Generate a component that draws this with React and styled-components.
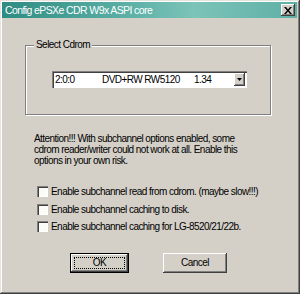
import React from 'react'
import styled, { createGlobalStyle } from 'styled-components'

const Global = createGlobalStyle`
  html, body { margin: 0; padding: 0; background: #d4d0c8; }
  body { font-family: "Liberation Sans", Arial, sans-serif; }
`

const Window = styled.div`
  box-sizing: border-box;
  width: 300px;
  height: 294px;
  padding: 2px 3px 2px 2px;
  background: #d4d0c8;
  box-shadow: inset -1px -1px 0 #404040, inset 1px 1px 0 #e6e3dc,
    inset -2px -2px 0 #808080, inset 2px 2px 0 #ffffff;
  display: flex;
  flex-direction: column;
  font-size: 10px;
  letter-spacing: -0.55px;
  white-space: nowrap;
  color: #000;
`

const TitleBar = styled.div`
  height: 16px;
  display: flex;
  align-items: center;
  justify-content: space-between;
  padding: 0 2px 0 3px;
  background: linear-gradient(to right, #2e8c82 0%, #5fb2a8 45%, #7cc3b9 65%, #5eb0a5 100%);
  color: #fff;
  font-size: 10.5px;
  letter-spacing: -0.6px;
`

const CloseBox = styled.div`
  box-sizing: border-box;
  width: 14px;
  height: 12px;
  background: #d4d0c8;
  box-shadow: inset -1px -1px 0 #404040, inset 1px 1px 0 #fff, inset -2px -2px 0 #808080;
  display: flex;
  align-items: center;
  justify-content: center;
`

const Body = styled.div`
  display: flex;
  flex-direction: column;
  padding-left: 23px;
`

const GroupBox = styled.div`
  position: relative;
  box-sizing: border-box;
  margin-top: 27px;
  width: 246px;
  height: 70px;
  border: 1px solid #808080;
  box-shadow: 1px 1px 0 #fff, inset 1px 1px 0 #fff;
  padding: 25px 0 0 26px;
`

const GroupLabel = styled.span`
  position: absolute;
  top: -7px;
  left: 8px;
  padding: 0 2px;
  background: #d4d0c8;
  line-height: 12px;
`

const Combo = styled.div`
  box-sizing: border-box;
  width: 195px;
  height: 17px;
  background: #fff;
  box-shadow: inset 1px 1px 0 #808080, inset 2px 2px 0 #404040, inset -1px -1px 0 #fff;
  display: flex;
  align-items: center;
  padding: 0 2px 0 3px;
`

const Cell = styled.span`
  width: ${p => p.$w}px;
  flex: none;
`

const DropButton = styled.div`
  margin-left: auto;
  box-sizing: border-box;
  width: 11px;
  height: 13px;
  background: #d4d0c8;
  box-shadow: inset -1px -1px 0 #404040, inset 1px 1px 0 #fff, inset -2px -2px 0 #808080;
  display: flex;
  align-items: center;
  justify-content: center;
`

const Note = styled.p`
  margin: 18px 0 0 9px;
  line-height: 11px;
`

const Options = styled.div`
  margin: 17px 0 0 12px;
  display: flex;
  flex-direction: column;
`

const Row = styled.label`
  height: 17.5px;
  display: flex;
  align-items: center;
  gap: 3px;
`

const Box = styled.span`
  box-sizing: border-box;
  width: 11px;
  height: 11px;
  background: #fbfbf8;
  box-shadow: inset 1px 1px 0 #808080, inset 2px 2px 0 #404040, inset -1px -1px 0 #fff;
  flex: none;
`

const Buttons = styled.div`
  margin: 17px 0 0 45px;
  display: flex;
  gap: 34px;
`

const Button = styled.div`
  box-sizing: border-box;
  width: ${p => p.$w}px;
  height: 20px;
  background: #d4d0c8;
  display: flex;
  align-items: center;
  justify-content: center;
  box-shadow: ${p => p.$default
    ? 'inset 0 0 0 1px #000, inset -2px -2px 0 #404040, inset 2px 2px 0 #fff, inset -3px -3px 0 #808080'
    : 'inset -1px -1px 0 #404040, inset 1px 1px 0 #fff, inset -2px -2px 0 #808080'};
`

const Focus = styled.span`
  box-sizing: border-box;
  width: calc(100% - 8px);
  height: calc(100% - 8px);
  border: 1px dotted #000;
  display: flex;
  align-items: center;
  justify-content: center;
`

export default function App() {
  return (
    <>
      <Global />
      <Window>
        <TitleBar>
          <span>Config ePSXe CDR W9x ASPI core</span>
          <CloseBox>
            <svg width="8" height="7" viewBox="0 0 8 7">
              <path d="M0 0h2l2 2.5L6 0h2L5 3.5 8 7H6L4 4.5 2 7H0l3-3.5z" fill="#000" />
            </svg>
          </CloseBox>
        </TitleBar>
        <Body>
          <GroupBox>
            <GroupLabel>Select Cdrom</GroupLabel>
            <Combo>
              <Cell $w={47}>2:0:0</Cell>
              <Cell $w={92}>DVD+RW RW5120</Cell>
              <Cell $w={30}>1.34</Cell>
              <DropButton>
                <svg width="5" height="3" viewBox="0 0 5 3">
                  <path d="M0 0h5L2.5 3z" fill="#000" />
                </svg>
              </DropButton>
            </Combo>
          </GroupBox>
          <Note>
            Attention!!! With subchannel options enabled, some<br />
            cdrom reader/writer could not work at all. Enable this<br />
            options in your own risk.
          </Note>
          <Options>
            <Row><Box />Enable subchannel read from cdrom. (maybe slow!!!)</Row>
            <Row><Box />Enable subchannel caching to disk.</Row>
            <Row><Box />Enable subchannel caching for LG-8520/21/22b.</Row>
          </Options>
          <Buttons>
            <Button $w={59} $default><Focus>OK</Focus></Button>
            <Button $w={64}>Cancel</Button>
          </Buttons>
        </Body>
      </Window>
    </>
  )
}
